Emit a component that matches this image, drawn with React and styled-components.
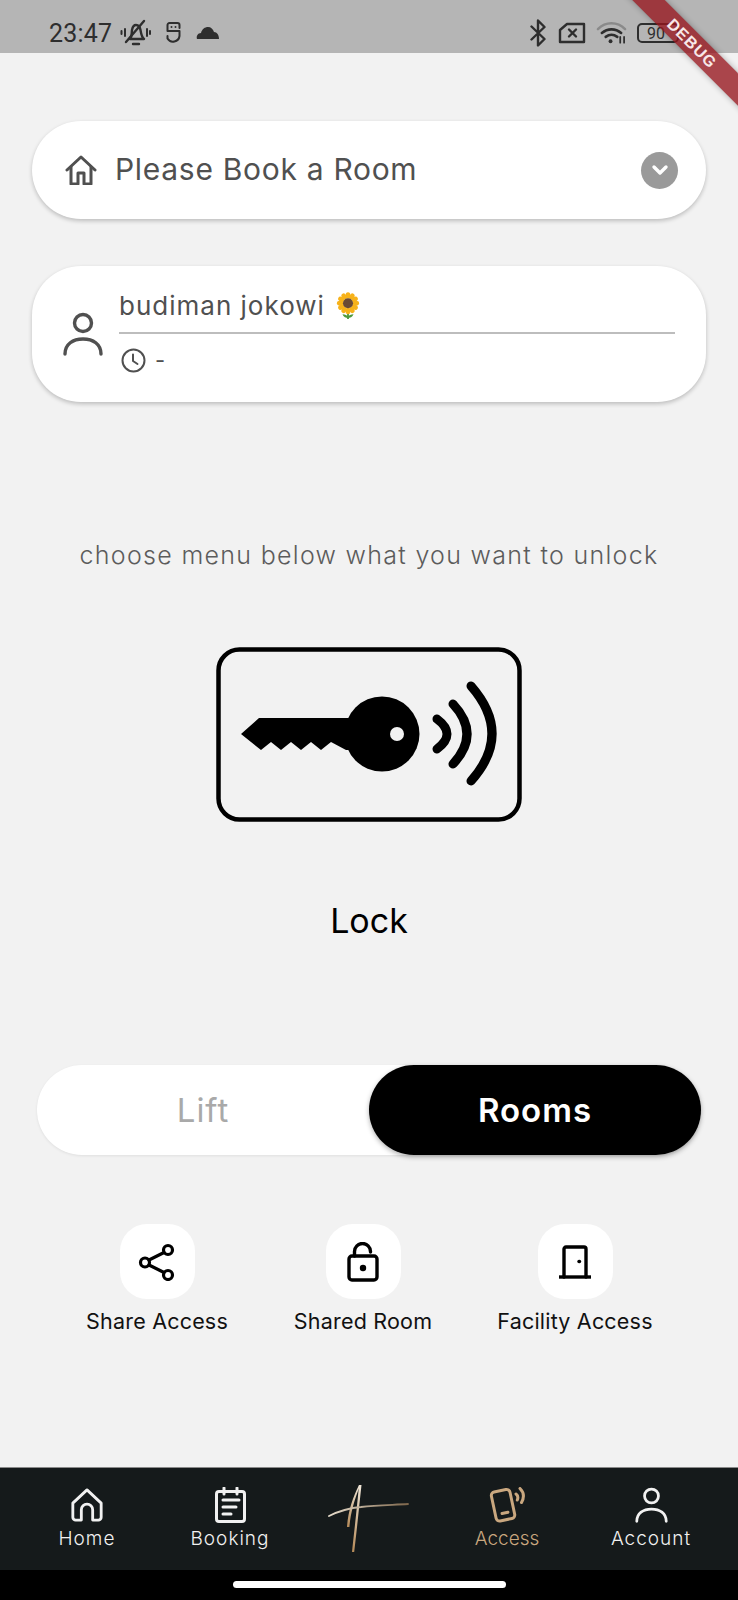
import React from 'react'
import styled, { createGlobalStyle } from 'styled-components'

const GlobalStyle = createGlobalStyle`
  html, body {
    margin: 0;
    padding: 0;
    background: #f2f2f2;
  }
  * {
    box-sizing: border-box;
  }
`

const Screen = styled.div`
  position: relative;
  width: 738px;
  height: 1600px;
  overflow: hidden;
  display: flex;
  flex-direction: column;
  background: #f2f2f2;
  font-family: Inter, 'Liberation Sans', sans-serif;
`

const StatusBar = styled.div`
  height: 53px;
  flex: none;
  display: flex;
  align-items: center;
  justify-content: space-between;
  padding: 13px 59px 0 49px;
  background: #b5b5b5;
  color: #2e2e2e;
`

const StatusGroup = styled.div`
  display: flex;
  align-items: center;
  gap: ${p => p.$gap}px;
`

const Clock = styled.span`
  font-family: Roboto, sans-serif;
  font-size: 25px;
  letter-spacing: 0.2px;
  margin-right: -6px;
`

const BatteryBox = styled.span`
  width: 42px;
  height: 20px;
  display: flex;
  align-items: center;
  justify-content: center;
  padding-right: 4px;
  border: 2px solid #2e2e2e;
  border-radius: 5px;
  font-family: Roboto, sans-serif;
  font-size: 16px;
`

const DebugBanner = styled.div`
  position: absolute;
  top: 32px;
  right: -44px;
  width: 180px;
  height: 23px;
  transform: rotate(45deg);
  background: rgba(150, 20, 28, 0.78);
  color: #f8e8e8;
  box-shadow: 0 0 6px rgba(0, 0, 0, 0.3);
  font-family: 'Liberation Sans', sans-serif;
  font-weight: 700;
  font-size: 16px;
  letter-spacing: 1px;
  line-height: 23px;
  text-align: center;
`

const Main = styled.main`
  flex: 1;
  display: flex;
  flex-direction: column;
`

const Card = styled.section`
  margin: ${p => p.$top}px 32px 0;
  height: ${p => p.$height}px;
  display: flex;
  align-items: center;
  background: #fff;
  border-radius: 49px;
  box-shadow: 0 2px 4px rgba(0, 0, 0, 0.22);
`

const RoomCard = styled(Card)`
  padding: 0 28px 0 33px;
  gap: 18px;
  color: #505050;
`

const RoomName = styled.span`
  flex: 1;
  margin-top: -3px;
  font-size: 30px;
  letter-spacing: 0.7px;
`

const ChevronBadge = styled.span`
  width: 37px;
  height: 37px;
  display: flex;
  align-items: center;
  justify-content: center;
  border-radius: 50%;
  background: #9a9a9a;
`

const GuestCard = styled(Card)`
  padding: 0 31px;
  gap: 16px;
  color: #505050;
`

const GuestInfo = styled.div`
  flex: 1;
  align-self: flex-start;
  display: flex;
  flex-direction: column;
`

const GuestName = styled.div`
  height: 68px;
  display: flex;
  align-items: center;
  gap: 11px;
  padding-top: 13px;
  border-bottom: 2px solid #bdbdbd;
  font-size: 26px;
  letter-spacing: 1px;
`

const GuestTime = styled.div`
  height: 52px;
  display: flex;
  align-items: center;
  gap: 9px;
  padding-left: 2px;
  font-size: 22px;
`

const Hint = styled.p`
  margin: 138px 0 0;
  color: #5c5c5c;
  font-size: 25px;
  font-weight: 300;
  letter-spacing: 1.3px;
  line-height: 30px;
  text-align: center;
`

const KeyArt = styled.div`
  margin-top: 77px;
  display: flex;
  justify-content: center;
`

const LockLabel = styled.div`
  margin-top: 79px;
  color: #000;
  font-size: 34px;
  line-height: 40px;
  text-align: center;
`

const Toggle = styled.div`
  margin: 124px 37px 0;
  height: 90px;
  display: flex;
  background: #fff;
  border-radius: 45px;
  box-shadow: 0 1px 3px rgba(0, 0, 0, 0.08);
`

const ToggleOption = styled.div`
  flex: 1;
  display: flex;
  align-items: center;
  justify-content: center;
  border-radius: 45px;
  font-size: 33px;
  letter-spacing: 1px;
  font-weight: ${p => (p.$active ? 600 : 400)};
  color: ${p => (p.$active ? '#fff' : '#a9a9a9')};
  background: ${p => (p.$active ? '#000' : 'transparent')};
  box-shadow: ${p => (p.$active ? '0 2px 5px rgba(0, 0, 0, 0.3)' : 'none')};
`

const Shortcuts = styled.div`
  margin-top: 69px;
  padding-left: 87px;
  display: grid;
  grid-template-columns: 140px 144px 152px;
  column-gap: 64px;
`

const Shortcut = styled.div`
  display: flex;
  flex-direction: column;
  align-items: center;
  gap: 8px;
`

const ShortcutTile = styled.div`
  width: 75px;
  height: 75px;
  display: flex;
  align-items: center;
  justify-content: center;
  background: #fff;
  border-radius: 27px;
  color: #000;
`

const ShortcutLabel = styled.span`
  color: #111;
  font-size: 21.5px;
  letter-spacing: 0.2px;
  line-height: 28px;
  white-space: nowrap;
`

const NavBar = styled.nav`
  height: 103px;
  flex: none;
  padding-left: 17px;
  display: grid;
  grid-template-columns: 140px 146px 132px 144px 144px;
  background: #151a1b;
  border-top: 1px solid #8a8a8a;
`

const NavItem = styled.div`
  display: flex;
  flex-direction: column;
  align-items: center;
  padding-top: 19px;
  color: ${p => (p.$active ? '#c9a77f' : '#f1f1f1')};
  font-size: 19px;
  font-weight: 300;
  letter-spacing: ${p => (p.$active ? 0 : 1)}px;
`

const NavIconSlot = styled.span`
  height: 36px;
  display: flex;
  align-items: center;
`

const NavLabel = styled.span`
  margin-top: 4px;
  line-height: 24px;
`

const LogoSlot = styled.span`
  margin-top: -4px;
  display: flex;
`

const GestureBar = styled.div`
  height: 30px;
  flex: none;
  display: flex;
  justify-content: center;
  padding-top: 11px;
  background: #000;
`

const GestureHandle = styled.span`
  width: 273px;
  height: 7px;
  background: #fff;
  border-radius: 4px;
`

const Icon = ({ width, height, box, sw = 3, children }) => (
  <svg
    width={width}
    height={height}
    viewBox={box}
    fill="none"
    stroke="currentColor"
    strokeWidth={sw}
    strokeLinecap="round"
    strokeLinejoin="round"
  >
    {children}
  </svg>
)

const MutedBell = () => (
  <Icon width={31} height={28} box="0 0 31 28" sw={2.4}>
    <path d="M10 20c2-2 1.500-5 2-9 .6-3 2-5 4-5s4 2 4.500 5c.5 3 1 7 3.500 9z" />
    <path d="M13 25h6" />
    <path d="M6 23 24 2" />
    <path d="M5 10v7M1.500 12v3M27 10v7M30 12v3" strokeWidth="2" />
  </Icon>
)

const Sim = () => (
  <Icon width={17} height={22} box="0 0 17 22" sw={2}>
    <path d="M14.500 6V3a2 2 0 0 0-2-2h-8a2 2 0 0 0-2 2v6h12v5a6.500 6.500 0 0 1-12 2.500V14" />
    <circle cx="6.500" cy="5" r="1" fill="currentColor" stroke="none" />
    <circle cx="10.500" cy="5" r="1" fill="currentColor" stroke="none" />
  </Icon>
)

const Cloud = () => (
  <svg width="24" height="14" viewBox="0 0 24 14" fill="#2e2e2e">
    <path d="M1 13c-1-3 1-6 4-6 1-4 4-6 7-6 3 0 5 2 6 5 3 0 5 3 5 7z" />
  </svg>
)

const Bluetooth = () => (
  <Icon width={19} height={28} box="0 0 18 28" sw={2.4}>
    <path d="M2 7.500 15 20l-6.500 6.500v-25L15 8 2 20.500" />
  </Icon>
)

const NoSim = () => (
  <Icon width={28} height={22} box="0 0 28 22" sw={2.4}>
    <path d="M9 2h17v18H2V8z" />
    <path d="M11 7.500l7 7M18 7.500l-7 7" />
  </Icon>
)

const Wifi = () => (
  <svg width="31" height="24" viewBox="0 0 32 24" fill="none" strokeLinecap="round">
    <path d="M2 8c8-8 20-8 28 0" stroke="#8a8a8a" strokeWidth="2.600" />
    <path d="M6 12c6-5 14-5 20 0M10 16c4-3 8-3 12 0" stroke="#2e2e2e" strokeWidth="2.600" />
    <circle cx="15" cy="20.500" r="2" fill="#2e2e2e" />
    <path d="M25 16v6M29 16v6" stroke="#2e2e2e" strokeWidth="1.800" />
  </svg>
)

const HomeLine = () => (
  <Icon width={32} height={30} box="0 0 32 30" sw={3}>
    <path d="M2 15 16 2l14 13" />
    <path d="M6 12v17h7v-11h6v11h7V12" />
  </Icon>
)

const Chevron = () => (
  <svg width="20" height="20" viewBox="0 0 20 20" fill="none" stroke="#fff" strokeWidth="3.400" strokeLinecap="round" strokeLinejoin="round">
    <path d="m4 7 6 6 6-6" />
  </svg>
)

const Person = ({ width, height }) => (
  <Icon width={width} height={height} box="0 0 40 44" sw={3.400}>
    <circle cx="20" cy="11" r="8.500" />
    <path d="M2 42c0-10 8-15 18-15s18 5 18 15" />
  </Icon>
)

const ClockFace = () => (
  <Icon width={25} height={25} box="0 0 25 25" sw={2}>
    <circle cx="12.500" cy="12.500" r="11" />
    <path d="M12 6.500v6.500l4.500 3" />
  </Icon>
)

const Sunflower = () => (
  <svg width="24" height="28" viewBox="0 0 26 30">
    <path d="M13 20v9" stroke="#4f9a3c" strokeWidth="2" />
    <path d="M7 24c3 0 5 1 6 3 1-2 3-3 6-3-1 3-4 4-6 4s-5-1-6-4z" fill="#4f9a3c" />
    <g fill="#f7b21a">
      {[0, 30, 60, 90, 120, 150, 180, 210, 240, 270, 300, 330].map(a => (
        <ellipse key={a} cx="13" cy="3.500" rx="2.600" ry="3.500" transform={`rotate(${a} 13 12)`} />
      ))}
    </g>
    <circle cx="13" cy="12" r="5.500" fill="#6b4a33" />
  </svg>
)

const KeyCard = () => (
  <svg width="306" height="175" viewBox="0 0 306 175">
    <rect x="2.500" y="2.500" width="301" height="170" rx="21" fill="none" stroke="#000" strokeWidth="4.500" />
    <path d="M25 87 43 71h100v32l-13 0-15-8-10 8-10-8-10 8-10-8-10 8-10-8-10 8z" fill="#000" />
    <circle cx="166" cy="87" r="37.500" fill="#000" />
    <circle cx="181" cy="87" r="7" fill="#f2f2f2" />
    <g fill="none" stroke="#000" strokeWidth="9" strokeLinecap="round">
      <path d="M221 72Q241 87 221 102" />
      <path d="M237 57Q265 87 237 117" />
      <path d="M255 39Q297 87 255 134" />
    </g>
  </svg>
)

const ShareIcon = () => (
  <Icon width={38} height={38} box="0 0 38 38" sw={3.200}>
    <circle cx="30" cy="7" r="4.500" />
    <circle cx="7" cy="19.500" r="4.500" />
    <circle cx="30" cy="32" r="4.500" />
    <path d="M26 9.500 11 17M11 22l15 7.500" />
  </Icon>
)

const UnlockIcon = () => (
  <Icon width={32} height={40} box="0 0 32 40" sw={3.400}>
    <rect x="2" y="14" width="28" height="24" rx="3" />
    <path d="M7.500 14V9.500a8 8 0 0 1 16 0v.5" />
    <circle cx="16" cy="26" r="3.200" fill="currentColor" stroke="none" />
  </Icon>
)

const DoorIcon = () => (
  <Icon width={34} height={34} box="0 0 34 34" sw={3.400}>
    <path d="M1 32h32" strokeLinecap="butt" />
    <path d="M6 32V4a2 2 0 0 1 2-2h18a2 2 0 0 1 2 2v28" />
    <path d="M21 16.500h.5" />
  </Icon>
)

const NavHome = () => (
  <Icon width={34} height={36} box="0 0 36 36" sw={3}>
    <path d="M3 16 18 2l15 14v15a3 3 0 0 1-3 3h-6V23a6 6 0 0 0-12 0v11H6a3 3 0 0 1-3-3z" />
  </Icon>
)

const NavBooking = () => (
  <Icon width={31} height={36} box="0 0 31 36" sw={3}>
    <rect x="1.500" y="4.500" width="28" height="30" rx="2.500" />
    <path d="M9 1v6M22 1v6M8 13h16M8 20h13M8 27h8" />
  </Icon>
)

const NavAccess = () => (
  <Icon width={37} height={36} box="0 0 37 36" sw={3}>
    <rect x="4.500" y="3.500" width="19" height="29.500" rx="3.500" transform="rotate(-12 14 18)" />
    <path d="M13 26.500l6-1.300" />
    <path d="M27 7c2 1.500 2.300 3.500 1.300 6M31 1.500c4 4 4.300 9 1.500 14" />
  </Icon>
)

const Signature = () => (
  <svg width="84" height="72" viewBox="0 0 84 72">
    <defs>
      <linearGradient id="stem-gold" x1="0" y1="0" x2="0" y2="1">
        <stop offset="0" stopColor="#efe6d8" />
        <stop offset="1" stopColor="#b58a58" />
      </linearGradient>
      <linearGradient id="bar-gold" x1="0" y1="0" x2="1" y2="0">
        <stop offset="0" stopColor="#e6dccb" />
        <stop offset="1" stopColor="#7d664b" />
      </linearGradient>
    </defs>
    <path d="M32 2C30 25 27 50 25 69l2.200 0C29.500 50 32 25 34.500 2z" fill="url(#stem-gold)" />
    <path d="M32 2C26 14 21 28 20 44l2.400 0C23.500 30 27.500 16 33 3z" fill="url(#stem-gold)" />
    <path d="M2 33C12 28 22 25 34 24 50 22 66 22 81 21" fill="none" stroke="url(#bar-gold)" strokeWidth="1.800" strokeLinecap="round" />
  </svg>
)

const shortcuts = [
  { label: 'Share Access', icon: <ShareIcon /> },
  { label: 'Shared Room', icon: <UnlockIcon /> },
  { label: 'Facility Access', icon: <DoorIcon /> },
]

const navLeft = [
  { label: 'Home', icon: <NavHome /> },
  { label: 'Booking', icon: <NavBooking /> },
]

const App = () => (
  <Screen>
    <GlobalStyle />
    <StatusBar>
      <StatusGroup $gap={14}>
        <Clock>23:47</Clock>
        <MutedBell />
        <Sim />
        <Cloud />
      </StatusGroup>
      <StatusGroup $gap={10}>
        <Bluetooth />
        <NoSim />
        <Wifi />
        <BatteryBox>90</BatteryBox>
      </StatusGroup>
    </StatusBar>
    <DebugBanner>DEBUG</DebugBanner>
    <Main>
      <RoomCard $top={68} $height={98}>
        <HomeLine />
        <RoomName>Please Book a Room</RoomName>
        <ChevronBadge><Chevron /></ChevronBadge>
      </RoomCard>
      <GuestCard $top={47} $height={136}>
        <Person width={40} height={44} />
        <GuestInfo>
          <GuestName>
            budiman jokowi
            <Sunflower />
          </GuestName>
          <GuestTime>
            <ClockFace />
            -
          </GuestTime>
        </GuestInfo>
      </GuestCard>
      <Hint>choose menu below what you want to unlock</Hint>
      <KeyArt><KeyCard /></KeyArt>
      <LockLabel>Lock</LockLabel>
      <Toggle>
        <ToggleOption>Lift</ToggleOption>
        <ToggleOption $active>Rooms</ToggleOption>
      </Toggle>
      <Shortcuts>
        {shortcuts.map(s => (
          <Shortcut key={s.label}>
            <ShortcutTile>{s.icon}</ShortcutTile>
            <ShortcutLabel>{s.label}</ShortcutLabel>
          </Shortcut>
        ))}
      </Shortcuts>
    </Main>
    <NavBar>
      {navLeft.map(n => (
        <NavItem key={n.label}>
          <NavIconSlot>{n.icon}</NavIconSlot>
          <NavLabel>{n.label}</NavLabel>
        </NavItem>
      ))}
      <NavItem><LogoSlot><Signature /></LogoSlot></NavItem>
      <NavItem $active>
        <NavIconSlot><NavAccess /></NavIconSlot>
        <NavLabel>Access</NavLabel>
      </NavItem>
      <NavItem>
        <NavIconSlot><Person width={33} height={36} /></NavIconSlot>
        <NavLabel>Account</NavLabel>
      </NavItem>
    </NavBar>
    <GestureBar><GestureHandle /></GestureBar>
  </Screen>
)

export default App
